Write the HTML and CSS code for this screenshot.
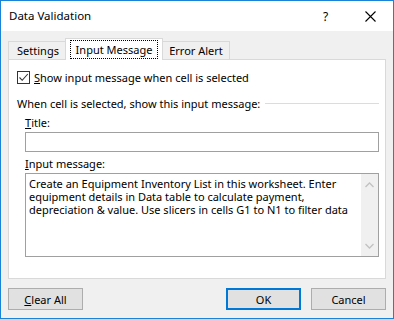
FILE: index.html
```html
<!DOCTYPE html>
<html lang="en">
<head>
    <meta charset="UTF-8">
    <title>Data Validation</title>
    <link rel="stylesheet" href="styles.css">
</head>
<body>
    <div class="window">
        <div class="titlebar">
            <span class="title">Data Validation</span>
            <span class="help">?</span>
            <span class="close">
                <svg width="11" height="11" viewBox="0 0 11 11"><path d="M0.5 0.5 L10.5 10.5 M10.5 0.5 L0.5 10.5" stroke="#000" stroke-width="1.1" fill="none"/></svg>
            </span>
        </div>
        <div class="content">
            <div class="tabs">
                <div class="tab tab-settings">Settings</div>
                <div class="tab tab-active"><span class="focus">Input Message</span></div>
                <div class="tab tab-error">Error Alert</div>
            </div>
            <div class="panel">
                <div class="check-row">
                    <span class="checkbox">
                        <svg width="11" height="11" viewBox="0 0 11 11"><path d="M1.5 5.5 L4.2 8.3 L9.8 2" stroke="#333" stroke-width="1.1" fill="none"/></svg>
                    </span>
                    <span><u>S</u>how input message when cell is selected</span>
                </div>
                <div class="group-head">
                    <span>When cell is selected, show this input message:</span>
                    <span class="group-line"></span>
                </div>
                <div class="field-label"><u>T</u>itle:</div>
                <div class="input-box"></div>
                <div class="field-label"><u>I</u>nput message:</div>
                <div class="textarea">
                    <div class="message">Create an Equipment Inventory List in this worksheet. Enter equipment details in Data table to calculate payment, depreciation &amp; value. Use slicers in cells G1 to N1 to filter data</div>
                    <div class="scrollbar">
                        <svg width="9" height="6" viewBox="0 0 9 6"><path d="M0.5 5 L4.5 1 L8.5 5" stroke="#c2c2c2" stroke-width="1.3" fill="none"/></svg>
                        <svg width="9" height="6" viewBox="0 0 9 6"><path d="M0.5 1 L4.5 5 L8.5 1" stroke="#c2c2c2" stroke-width="1.3" fill="none"/></svg>
                    </div>
                </div>
            </div>
            <div class="footer">
                <button class="btn"><u>C</u>lear All</button>
                <span class="spacer"></span>
                <button class="btn btn-default">OK</button>
                <button class="btn">Cancel</button>
            </div>
        </div>
    </div>
</body>
</html>
```

FILE: styles.css
```css
body {
    margin: 0;
    font-family: "Noto Sans", "Open Sans", sans-serif;
    font-size: 11px;
    color: #000;
}

.window {
    width: 394px;
    height: 319px;
    box-sizing: border-box;
    border: 1px solid #1883d7;
    display: flex;
    flex-direction: column;
    background: #f0f0f0;
}

.titlebar {
    height: 30px;
    background: #fff;
    display: flex;
    align-items: center;
    padding-left: 8px;
}

.title {
    flex: 1;
    font-size: 11.5px;
    margin-top: -1px;
}

.help {
    font-size: 12px;
    width: 12px;
    margin-right: 30px;
}

.close {
    display: flex;
    margin-right: 17px;
}

.content {
    flex: 1;
    padding: 7px 7px 0 7px;
}

.tabs {
    display: flex;
    height: 21px;
    align-items: flex-end;
    position: relative;
    z-index: 1;
}

.tab {
    height: 18px;
    box-sizing: border-box;
    border: 1px solid #d9d9d9;
    border-bottom: none;
    display: flex;
    align-items: center;
    justify-content: center;
    background: #f0f0f0;
    line-height: 1;
}

.tab-settings {
    width: 57px;
    border-right: none;
    padding-left: 2px;
}

.tab-error {
    width: 67px;
    border-left: none;
}

.tab-active {
    width: 98px;
    height: 22px;
    margin-bottom: -1px;
    background: #fff;
    padding-bottom: 1px;
}

.focus {
    outline: 1px dotted #000;
    padding: 3px 5px 3px;
}

.panel {
    height: 220px;
    box-sizing: border-box;
    border: 1px solid #d9d9d9;
    background: #fff;
    padding: 11px 6px 0 8px;
}

.check-row {
    display: flex;
    align-items: center;
    height: 13px;
    gap: 4px;
}

.checkbox {
    width: 13px;
    height: 13px;
    box-sizing: border-box;
    border: 1px solid #333;
    display: flex;
    align-items: center;
    justify-content: center;
}

.group-head {
    display: flex;
    align-items: center;
    height: 16px;
    margin-top: 11px;
    gap: 5px;
}

.group-line {
    flex: 1;
    border-top: 1px solid #dcdcdc;
}

.field-label {
    height: 16px;
    line-height: 16px;
    margin-left: 8px;
    margin-top: 4px;
}

.input-box {
    margin: 1px 0 2px 8px;
    height: 20px;
    box-sizing: border-box;
    border: 1px solid #a0a0a0;
}

.textarea {
    margin: 1px 0 0 8px;
    height: 84px;
    box-sizing: border-box;
    border: 1px solid #a0a0a0;
    display: flex;
}

.message {
    flex: 1;
    padding: 3px 8px 2px 3px;
    line-height: 13px;
}

.scrollbar {
    width: 17px;
    background: #f0f0f0;
    display: flex;
    flex-direction: column;
    justify-content: space-between;
    align-items: center;
    padding: 8px 0 7px;
}

.footer {
    display: flex;
    margin-top: 9px;
    gap: 10px;
}

.spacer {
    flex: 1;
}

.btn {
    width: 75px;
    height: 22px;
    box-sizing: border-box;
    border: 1px solid #adadad;
    background: #e1e1e1;
    font-family: inherit;
    font-size: 11px;
    color: #000;
    padding: 0;
}

.btn-default {
    border: 2px solid #0078d7;
}
```
